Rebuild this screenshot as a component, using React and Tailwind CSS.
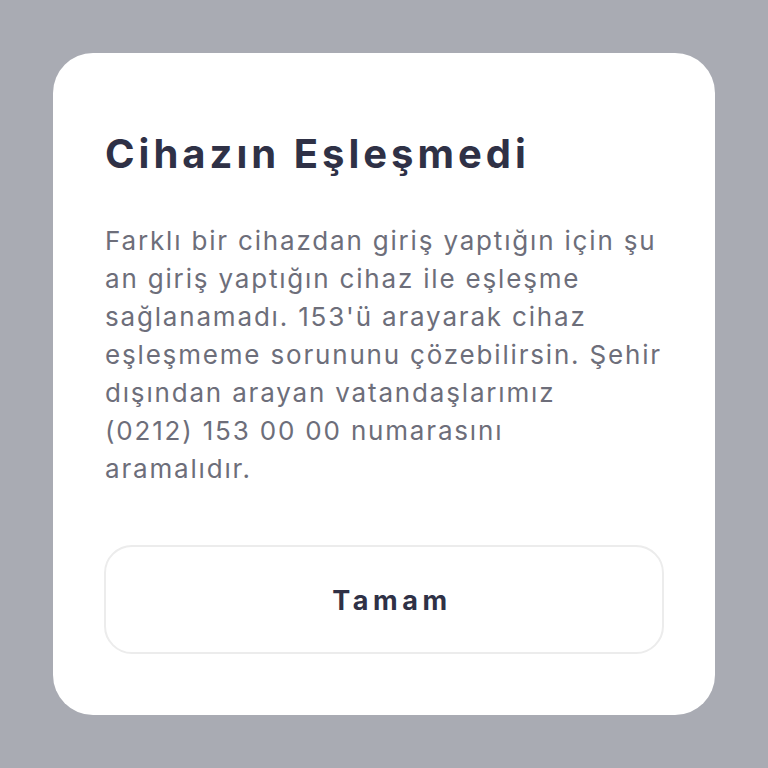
export default function App() {
  return (
    <div className="w-[768px] h-[768px] bg-[#a9abb3] flex items-center justify-center" style={{ fontFamily: 'Inter, "Noto Sans", sans-serif' }}>
      <div className="w-[662px] h-[662px] bg-white rounded-[40px] px-[51px] pt-[77px] flex flex-col">
        <h1 className="text-[40px] leading-[48px] font-bold text-[#2f3146] tracking-[0.1em] pl-[1px]">Cihazın Eşleşmedi</h1>
        <p className="mt-[44px] text-[26px] leading-[38px] text-[#6d6e7a] tracking-[0.07em] pl-[1px]">
          Farklı bir cihazdan giriş yaptığın için şu<br />
          an giriş yaptığın cihaz ile eşleşme<br />
          sağlanamadı. 153'ü arayarak cihaz<br />
          eşleşmeme sorununu çözebilirsin. Şehir<br />
          dışından arayan vatandaşlarımız<br />
          (0212) 153 00 00 numarasını<br />
          aramalıdır.
        </p>
        <button className="mt-[57px] h-[109px] w-full rounded-[28px] border-2 border-[#ececec] bg-white pt-[4px] pl-[16px] text-[27px] font-bold tracking-[0.17em] text-[#2f3146]">
          Tamam
        </button>
      </div>
    </div>
  );
}
